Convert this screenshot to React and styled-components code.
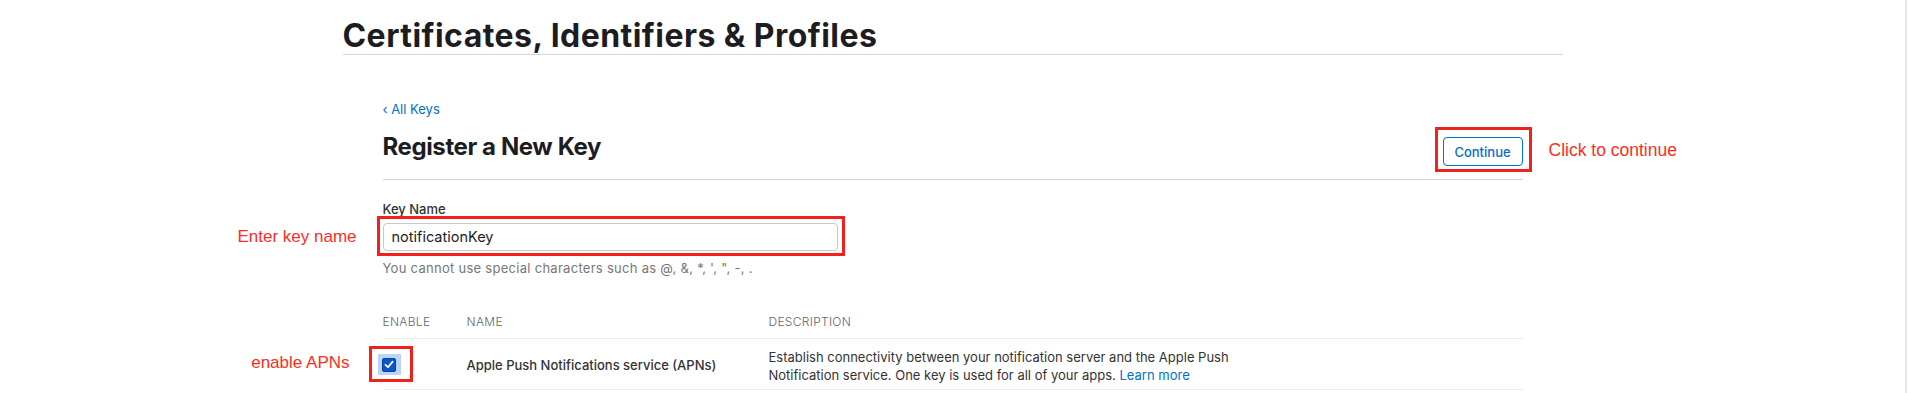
import React from 'react';
import styled, { createGlobalStyle } from 'styled-components';

const Global = createGlobalStyle`
  html, body {
    margin: 0;
    padding: 0;
    background: #fff;
  }
  body {
    font-family: Inter, "Noto Sans", sans-serif;
    color: #1d1d1f;
  }
`;

const Shell = styled.div`
  display: flex;
  min-height: 393px;
`;
const Page = styled.div`
  flex: 1;
`;
const ScrollTrack = styled.div`
  width: 2px;
  border-left: 2px solid #e6e6e6;
`;

const Container = styled.div`
  width: 1220px;
  margin: 0 auto;
`;
const PageTitle = styled.h1`
  margin: 17px 0 0;
  font-size: 32px;
  line-height: 37px;
  font-weight: 700;
  letter-spacing: 0.45px;
  border-bottom: 1px solid #d6d6d6;
`;
const Section = styled.div`
  padding: 45px 40px 0;
`;
const BackLink = styled.a`
  display: block;
  font-size: 13px;
  line-height: 18px;
  color: #0070c9;
  text-decoration: none;
`;
const HeaderRow = styled.div`
  display: flex;
  justify-content: space-between;
  align-items: flex-start;
  margin-top: 14px;
  padding-bottom: 13px;
  border-bottom: 1px solid #d6d6d6;
`;
const SectionTitle = styled.h2`
  margin: 0;
  font-size: 24px;
  line-height: 30px;
  font-weight: 700;
  letter-spacing: -0.4px;
`;
const Marked = styled.div`
  position: relative;
  display: inline-block;
  margin-top: ${(p) => p.$mt || 0}px;
`;
const RedBox = styled.span`
  position: absolute;
  top: ${(p) => -p.$t}px;
  right: ${(p) => -p.$r}px;
  bottom: ${(p) => -p.$b}px;
  left: ${(p) => -p.$l}px;
  border: 3px solid #f0221b;
  pointer-events: none;
`;
const Note = styled.span`
  position: absolute;
  top: 50%;
  transform: translateY(calc(-50% + ${(p) => p.$dy || 0}px));
  ${(p) => (p.$side === 'right' ? `left: calc(100% + ${p.$gap}px);` : `right: calc(100% + ${p.$gap}px);`)}
  white-space: nowrap;
  font-family: "Liberation Sans", Arial, sans-serif;
  font-size: ${(p) => p.$size || 17}px;
  color: #fb2e23;
`;
const OutlineButton = styled.button`
  display: block;
  width: 80px;
  height: 29px;
  padding: 0;
  border: 1px solid #0070c9;
  border-radius: 4px;
  background: #fff;
  color: #0070c9;
  font-family: inherit;
  font-size: 13px;
  font-weight: 500;
`;
const Field = styled.div`
  margin-top: 20px;
`;
const Label = styled.div`
  font-size: 13px;
  line-height: 18px;
  font-weight: 500;
  color: #333;
`;
const TextInput = styled.div`
  box-sizing: border-box;
  width: 455px;
  height: 28px;
  padding: 0 8px;
  border: 1px solid #c9c9c9;
  border-radius: 4px;
  font-size: 14.5px;
  line-height: 26px;
  color: #1d1d1f;
`;
const Hint = styled.div`
  margin-top: 8px;
  font-size: 13px;
  line-height: 18px;
  letter-spacing: 0.28px;
  color: #777;
`;
const Table = styled.div`
  margin-top: 36px;
`;
const Row = styled.div`
  display: grid;
  grid-template-columns: 84px 302px 1fr;
  align-items: center;
  border-bottom: 1px solid #ececec;
  padding: ${(p) => (p.$head ? '0 0 7px' : '5px 0')};
`;
const HeadCell = styled.div`
  font-size: 12px;
  line-height: 18px;
  letter-spacing: 0.3px;
  color: #666;
  font-weight: 300;
`;
const NameCell = styled.div`
  font-size: 13px;
  line-height: 18px;
  font-weight: 500;
  color: #333;
  padding-top: 2px;
`;
const DescCell = styled.div`
  padding-top: 4px;
  font-size: 13px;
  line-height: 18px;
  color: #333;
`;
const InlineLink = styled.a`
  color: #0070c9;
  text-decoration: none;
`;
const Focus = styled.span`
  display: inline-flex;
  align-items: center;
  justify-content: center;
  width: 23px;
  height: 21px;
  margin-left: -5px;
  background: #b9d5f7;
`;
const CheckBox = styled.span`
  box-sizing: border-box;
  display: inline-flex;
  align-items: center;
  justify-content: center;
  width: 14px;
  height: 14px;
  border-radius: 2px;
  background: #0b56c8;
  border: 1px solid #0a3f96;
`;

export default function App() {
  return (
    <Shell>
      <Global />
      <Page>
        <Container>
          <PageTitle>Certificates, Identifiers &amp; Profiles</PageTitle>
          <Section>
            <BackLink>‹ All Keys</BackLink>
            <HeaderRow>
              <SectionTitle>Register a New Key</SectionTitle>
              <Marked $mt={5}>
                <OutlineButton>Continue</OutlineButton>
                <RedBox $t={10} $r={9} $b={6} $l={8} />
                <Note $side="right" $gap={26} $size={17.5} $dy={-2}>Click to continue</Note>
              </Marked>
            </HeaderRow>

            <Field>
              <Label>Key Name</Label>
              <Marked $mt={5}>
                <TextInput>notificationKey</TextInput>
                <RedBox $t={7} $r={7} $b={5} $l={6} />
                <Note $gap={26}>Enter key name</Note>
              </Marked>
              <Hint>You cannot use special characters such as @, &amp;, *, ', ", -, .</Hint>
            </Field>

            <Table>
              <Row $head>
                <HeadCell>ENABLE</HeadCell>
                <HeadCell>NAME</HeadCell>
                <HeadCell>DESCRIPTION</HeadCell>
              </Row>
              <Row>
                <div>
                  <Marked>
                    <Focus>
                      <CheckBox>
                        <svg width="10" height="9" viewBox="0 0 10 9">
                          <path d="M1.5 4.8 L4 7.2 L8.6 1.6" fill="none" stroke="#fff" strokeWidth="1.8" strokeLinecap="round" strokeLinejoin="round" />
                        </svg>
                      </CheckBox>
                    </Focus>
                    <RedBox $t={7} $r={12} $b={7} $l={14} />
                    <Note $gap={33} $dy={-1}>enable APNs</Note>
                  </Marked>
                </div>
                <NameCell>Apple Push Notifications service (APNs)</NameCell>
                <DescCell>
                  Establish connectivity between your notification server and the Apple Push
                  <br />
                  Notification service. One key is used for all of your apps.{' '}
                  <InlineLink>Learn more</InlineLink>
                </DescCell>
              </Row>
            </Table>
          </Section>
        </Container>
      </Page>
      <ScrollTrack />
    </Shell>
  );
}
